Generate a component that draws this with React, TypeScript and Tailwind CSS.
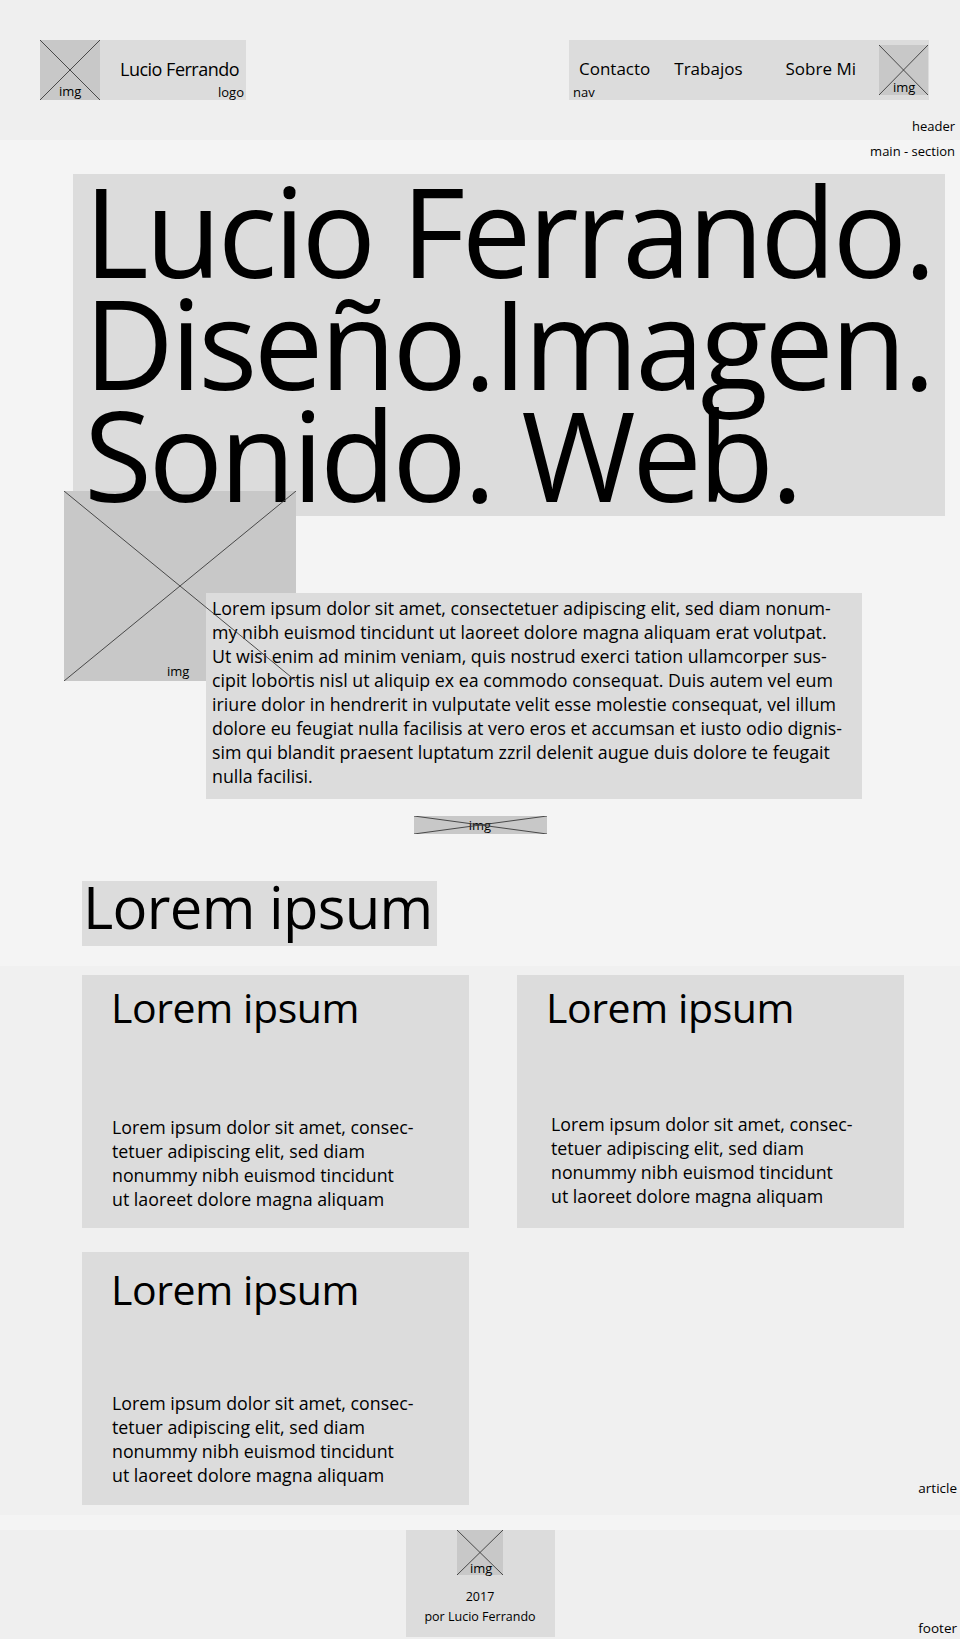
import React from "react";

const sans = "font-['Open_Sans','Liberation_Sans',sans-serif]";

// a wireframe image placeholder: grey box with an X across it
function Cross({ className = "" }: { className?: string }) {
  return (
    <svg
      className={`absolute inset-0 h-full w-full ${className}`}
      viewBox="0 0 100 100"
      preserveAspectRatio="none"
    >
      <line x1="0" y1="0" x2="100" y2="100" stroke="#3a3a3a" strokeWidth="0.9" vectorEffect="non-scaling-stroke" />
      <line x1="100" y1="0" x2="0" y2="100" stroke="#3a3a3a" strokeWidth="0.9" vectorEffect="non-scaling-stroke" />
    </svg>
  );
}

const cards = [
  {
    title: "pt-[8px] pl-[29px]",
    body: "mt-[84px] pl-[30px]",
  },
  {
    title: "pt-[8px] pl-[29px]",
    body: "mt-[81px] pl-[34px]",
  },
  {
    title: "pt-[13px] pl-[29px]",
    body: "mt-[78px] pl-[30px]",
  },
];

const para = [
  "Lorem ipsum dolor sit amet, consectetuer adipiscing elit, sed diam nonum-",
  "my nibh euismod tincidunt ut laoreet dolore magna aliquam erat volutpat.",
  "Ut wisi enim ad minim veniam, quis nostrud exerci tation ullamcorper sus-",
  "cipit lobortis nisl ut aliquip ex ea commodo consequat. Duis autem vel eum",
  "iriure dolor in hendrerit in vulputate velit esse molestie consequat, vel illum",
  "dolore eu feugiat nulla facilisis at vero eros et accumsan et iusto odio dignis-",
  "sim qui blandit praesent luptatum zzril delenit augue duis dolore te feugait",
  "nulla facilisi.",
];

const cardText = [
  "Lorem ipsum dolor sit amet, consec-",
  "tetuer adipiscing elit, sed diam",
  "nonummy nibh euismod tincidunt",
  "ut laoreet dolore magna aliquam",
];

export default function App() {
  return (
    <div className={`w-[960px] h-[1639px] overflow-hidden bg-[#efefef] text-black ${sans}`}>
      {/* header */}
      <header className="relative h-[140px] bg-[#efefef] flex justify-between pl-[40px] pr-[31px] pt-[40px]">
        <div className="relative flex h-[60px] w-[206px] bg-[#dcdcdc]">
          <div className="relative h-[60px] w-[60px] bg-[#c8c8c8]">
            <Cross />
            <span className="absolute left-[19px] bottom-[2px] text-[13px] leading-[13px]">img</span>
          </div>
          <div className="pl-[20px] pt-[17px] text-[18px] leading-[24px] tracking-[-0.5px]">Lucio Ferrando</div>
          <span className="absolute right-[2px] bottom-[1px] text-[13px] leading-[13px]">logo</span>
        </div>

        <nav className="relative flex h-[60px] w-[360px] items-start bg-[#dcdcdc] pl-[10px]">
          <span className="pt-[17px] text-[17px] leading-[24px]">Contacto</span>
          <span className="ml-[24px] pt-[17px] text-[17px] leading-[24px]">Trabajos</span>
          <span className="ml-[43px] pt-[17px] text-[17px] leading-[24px]">Sobre Mi</span>
          <div className="relative ml-auto mr-[1px] mt-[5px] h-[50px] w-[49px] bg-[#c8c8c8]">
            <Cross />
            <span className="absolute left-[14px] bottom-[1px] text-[13px] leading-[13px]">img</span>
          </div>
          <span className="absolute left-[4px] bottom-[1px] text-[13px] leading-[13px]">nav</span>
        </nav>

        <span className="absolute right-[5px] bottom-[7px] text-[13px] leading-[13px]">header</span>
      </header>

      {/* main - section */}
      <main className="relative bg-[#f4f4f4] pt-[36px] pb-[20px]">
        <span className="absolute right-[5px] top-[5px] text-[13px] leading-[13px]">main - section</span>

        <div className="ml-[73px] h-[342px] w-[872px] bg-[#dcdcdc] pl-[11px]">
          <h1 className="relative z-20 mt-[-2px] text-[124px] leading-[112px] tracking-[-3.5px]">
            <div>Lucio Ferrando.</div>
            <div>Diseño.Imagen.</div>
            <div>Sonido. Web.</div>
          </h1>
        </div>

        <div className="relative ml-[64px] mt-[-25px] h-[190px] w-[232px] bg-[#c8c8c8]">
          <Cross className="z-30" />
          <span className="absolute left-[103px] bottom-[3px] text-[13px] leading-[13px]">img</span>
        </div>

        <div className="relative z-10 ml-[206px] mt-[-88px] h-[206px] w-[656px] bg-[#dcdcdc] pl-[6px] pt-[3px] text-[17.8px] leading-[24px]">
          {para.map((l, i) => (
            <div key={i} className="whitespace-nowrap">{l}</div>
          ))}
        </div>

        <div className="relative mx-auto mt-[17px] flex h-[18px] w-[133px] items-center justify-center bg-[#c8c8c8]">
          <span className="text-[13px] leading-[13px]">img</span>
          <Cross />
        </div>

        <div className="ml-[82px] mt-[47px] h-[65px] w-[355px] bg-[#dcdcdc] pl-[1px]">
          <h2 className="text-[58px] leading-[51px] tracking-[-0.7px]">Lorem ipsum</h2>
        </div>
      </main>

      {/* article */}
      <section className="relative bg-[#f0f0f0] pl-[82px] pt-[9px] pb-[10px]">
        <div className="grid grid-cols-[387px_387px] gap-x-[48px] gap-y-[24px]">
          {cards.map((c, i) => (
            <div key={i} className="h-[253px] bg-[#dcdcdc]">
              <h3 className={`text-[41px] leading-[48px] tracking-[-0.4px] ${c.title}`}>Lorem ipsum</h3>
              <div className={`text-[17.8px] leading-[24px] ${c.body}`}>
                {cardText.map((l, j) => (
                  <div key={j}>{l}</div>
                ))}
              </div>
            </div>
          ))}
        </div>
        <span className="absolute right-[3px] bottom-[20px] text-[13.5px] leading-[14px]">article</span>
      </section>

      <div className="h-[15px] bg-[#f4f4f4]" />

      {/* footer */}
      <footer className="relative h-[107px] bg-[#efefef]">
        <div className="mx-auto flex h-full w-[149px] flex-col items-center bg-[#dcdcdc]">
          <div className="relative h-[45px] w-[46px] bg-[#c8c8c8]">
            <Cross />
            <span className="absolute left-[13px] bottom-[0px] text-[13px] leading-[13px]">img</span>
          </div>
          <div className="mt-[12px] text-[12.5px] leading-[20px]">2017</div>
          <div className="text-[12.5px] leading-[20px]">por Lucio Ferrando</div>
        </div>
        <span className="absolute right-[3px] bottom-[2px] text-[13.5px] leading-[14px]">footer</span>
      </footer>
    </div>
  );
}
